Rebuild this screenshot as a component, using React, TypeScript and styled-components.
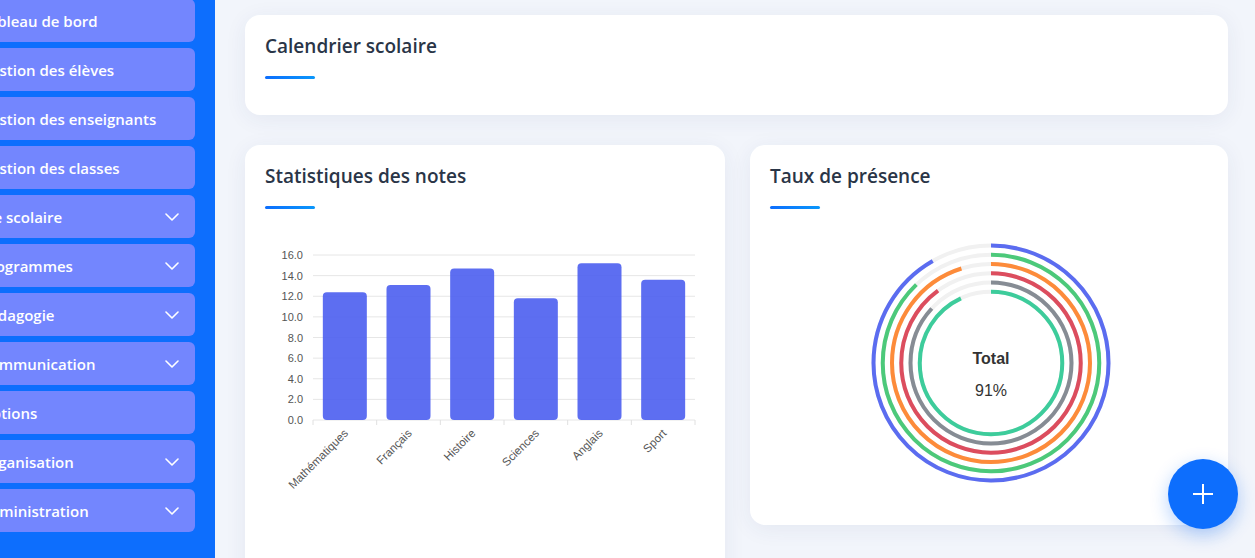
import React from "react";
import styled, { createGlobalStyle } from "styled-components";

const Global = createGlobalStyle`
  html, body { margin: 0; padding: 0; height: 100%; overflow: hidden; }
  body { font-family: "Open Sans", "Noto Sans", sans-serif; background: #f2f5fb; }
  * { box-sizing: border-box; }
`;

const Shell = styled.div`
  display: flex;
  height: 100vh;
  overflow: hidden;
`;

const Sidebar = styled.aside`
  width: 215px;
  flex: 0 0 215px;
  background: #0d6efd;
  overflow: hidden;
  padding: 0 20px 0 0;
`;

const Nav = styled.nav`
  display: flex;
  flex-direction: column;
  gap: 6px;
  margin: -1px 0 0 -60px;
`;

const NavItem = styled.div`
  height: 43px;
  border-radius: 6px;
  background: #7386fe;
  color: #ffffff;
  font-family: "Open Sans", sans-serif;
  font-weight: 600;
  font-size: 15px;
  white-space: nowrap;
  display: flex;
  align-items: center;
  justify-content: space-between;
  padding: 0 16px 0 40px;
`;

const Main = styled.main`
  flex: 1;
  padding: 15px 28px 0 30px;
  display: flex;
  flex-direction: column;
  gap: 30px;
`;

const Card = styled.section<{ $pb?: number }>`
  background: #fff;
  border-radius: 15px;
  box-shadow: 0 4px 22px rgba(40, 60, 120, 0.07);
  padding: 18px 20px ${(p) => p.$pb ?? 35}px;
`;

const Title = styled.h2`
  margin: 0;
  font-family: "Open Sans", sans-serif;
  font-weight: 600;
  font-size: 19px;
  line-height: 26px;
  color: #2a3547;
`;

const Underline = styled.div`
  width: 50px;
  height: 3px;
  border-radius: 2px;
  margin-top: 17px;
  background: linear-gradient(90deg, #0d6efd, #0a97fb);
`;

const Row = styled.div`
  display: grid;
  grid-template-columns: 1fr 1fr;
  gap: 25px;
  align-items: start;
`;

const ChartBox = styled.div`
  margin-top: 24px;
  display: flex;
  justify-content: center;
`;

const Fab = styled.button`
  position: fixed;
  right: 17px;
  bottom: 29px;
  width: 70px;
  height: 70px;
  border-radius: 50%;
  border: none;
  background: #0d6efd;
  box-shadow: 0 6px 18px rgba(13, 110, 253, 0.3);
  display: flex;
  align-items: center;
  justify-content: center;
  padding: 0;
`;

const items: { label: string; chevron: boolean }[] = [
  { label: "Tableau de bord", chevron: false },
  { label: "Gestion des élèves", chevron: false },
  { label: "Gestion des enseignants", chevron: false },
  { label: "Gestion des classes", chevron: false },
  { label: "Vie scolaire", chevron: true },
  { label: "Programmes", chevron: true },
  { label: "Pédagogie", chevron: true },
  { label: "Communication", chevron: true },
  { label: "Options", chevron: false },
  { label: "Organisation", chevron: true },
  { label: "Administration", chevron: true },
];

const Chevron = () => (
  <svg width="14" height="8" viewBox="0 0 14 8" fill="none">
    <path d="M1 1 L7 7 L13 1" stroke="#fff" strokeWidth="1.6" strokeLinecap="round" strokeLinejoin="round" />
  </svg>
);

const subjects = [
  { name: "Mathématiques", v: 12.4 },
  { name: "Français", v: 13.1 },
  { name: "Histoire", v: 14.7 },
  { name: "Sciences", v: 11.8 },
  { name: "Anglais", v: 15.2 },
  { name: "Sport", v: 13.6 },
];

const BarChart = () => {
  const x0 = 48;
  const x1 = 430;
  const yBase = 187;
  const unit = 10.3125;
  const cw = (x1 - x0) / subjects.length;
  const ticks = [0, 2, 4, 6, 8, 10, 12, 14, 16];
  return (
    <svg width="440" height="300" viewBox="0 0 440 300">
      {ticks.map((t) => {
        const y = yBase - t * unit;
        return (
          <g key={t}>
            <line x1={x0} x2={x1} y1={y} y2={y} stroke="#e6e6e6" strokeWidth="1" />
            <text x={38} y={y + 4} textAnchor="end" fontFamily="Liberation Sans, Arial, sans-serif" fontSize="11" fill="#555">
              {t.toFixed(1)}
            </text>
          </g>
        );
      })}
      {Array.from({ length: subjects.length + 1 }).map((_, i) => (
        <line key={i} x1={x0 + i * cw} x2={x0 + i * cw} y1={yBase} y2={yBase + 5} stroke="#e0e0e0" strokeWidth="1" />
      ))}
      {subjects.map((s, i) => {
        const cx = x0 + cw * (i + 0.5);
        const h = s.v * unit;
        return (
          <g key={s.name}>
            <rect x={cx - 22} y={yBase - h} width={44} height={h} rx={4} fill="#4b5ef0" fillOpacity="0.9" />
            <text
              x={cx + 4}
              y={yBase + 14}
              textAnchor="end"
              fontFamily="Liberation Sans, Arial, sans-serif"
              fontSize="11.5"
              fill="#555"
              transform={`rotate(-45 ${cx + 4} ${yBase + 14})`}
            >
              {s.name}
            </text>
          </g>
        );
      })}
    </svg>
  );
};

const rings = [
  { color: "#5b6cf0", p: 0.917 },
  { color: "#4cc97a", p: 0.878 },
  { color: "#fd8b3a", p: 0.95 },
  { color: "#dc4d5e", p: 0.898 },
  { color: "#868c94", p: 0.867 },
  { color: "#3dcc9b", p: 0.929 },
];

const Radial = () => {
  const cx = 221;
  const cy = 130;
  return (
    <svg width="438" height="260" viewBox="0 0 438 260">
      {rings.map((r, i) => {
        const rad = 117.5 - 9.25 * i;
        const c = 2 * Math.PI * rad;
        return (
          <g key={i}>
            <circle cx={cx} cy={cy} r={rad} fill="none" stroke="#f1f1f1" strokeWidth="4" />
            <circle
              cx={cx}
              cy={cy}
              r={rad}
              fill="none"
              stroke={r.color}
              strokeWidth="4"
              strokeDasharray={`${r.p * c} ${c}`}
              transform={`rotate(-90 ${cx} ${cy})`}
            />
          </g>
        );
      })}
      <text x={cx} y={cy + 1} textAnchor="middle" fontFamily="Liberation Sans, Arial, sans-serif" fontSize="16" fontWeight="700" fill="#333">
        Total
      </text>
      <text x={cx} y={cy + 33} textAnchor="middle" fontFamily="Liberation Sans, Arial, sans-serif" fontSize="16" fill="#333">
        91%
      </text>
    </svg>
  );
};

export default function App() {
  return (
    <>
      <Global />
      <Shell>
        <Sidebar>
          <Nav>
            {items.map((it) => (
              <NavItem key={it.label}>
                <span>{it.label}</span>
                {it.chevron && <Chevron />}
              </NavItem>
            ))}
          </Nav>
        </Sidebar>
        <Main>
          <Card $pb={36}>
            <Title>Calendrier scolaire</Title>
            <Underline />
          </Card>
          <Row>
            <Card $pb={60}>
              <Title>Statistiques des notes</Title>
              <Underline />
              <ChartBox>
                <BarChart />
              </ChartBox>
            </Card>
            <Card $pb={32}>
              <Title>Taux de présence</Title>
              <Underline />
              <ChartBox>
                <Radial />
              </ChartBox>
            </Card>
          </Row>
        </Main>
      </Shell>
      <Fab aria-label="Ajouter">
        <svg width="22" height="22" viewBox="0 0 22 22">
          <path d="M11 1 V21 M1 11 H21" stroke="#fff" strokeWidth="2" />
        </svg>
      </Fab>
    </>
  );
}
